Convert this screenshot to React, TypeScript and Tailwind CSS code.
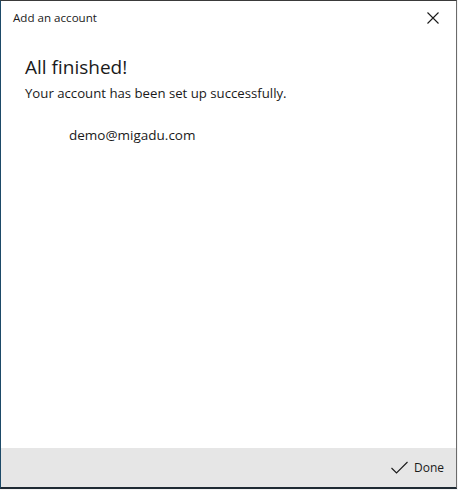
import React from "react";

function CloseIcon() {
  return (
    <svg width="12" height="12" viewBox="0 0 12 12" fill="none">
      <path d="M0.5 0.5 L11.5 11.5 M11.5 0.5 L0.5 11.5" stroke="#1a1a1a" strokeWidth="1.1" />
    </svg>
  );
}

function CheckIcon() {
  return (
    <svg width="17" height="13" viewBox="0 0 17 13" fill="none">
      <path d="M0.5 7 L5.5 12 L16.5 1" stroke="#1a1a1a" strokeWidth="1.1" />
    </svg>
  );
}

export default function App() {
  return (
    <div
      className="flex h-[490px] w-[458px] bg-[#f4f4f4] text-[#1a1a1a]"
      style={{ fontFamily: '"Open Sans", "Noto Sans", sans-serif' }}
    >
      <div className="flex h-[489px] w-[457px] flex-col border-b-2 border-l border-r border-t border-b-[#1f2a33] border-l-[#1d4a68] border-r-[#6b6b6b] border-t-[#3a3a3a] bg-white">
        <div className="flex h-[33px] items-center justify-between pl-3 pr-[17px]">
          <span className="text-[11.6px]">Add an account</span>
          <CloseIcon />
        </div>

        <div className="flex-1 px-6 pt-[20px]">
          <h1 className="text-[19px] leading-[26px]">All finished!</h1>
          <p className="mt-[3px] text-[13.2px] leading-[20px]">
            Your account has been set up successfully.
          </p>
          <p className="mt-[22px] pl-11 text-[13.5px] leading-[20px]">demo@migadu.com</p>
        </div>

        <div className="flex h-[39px] items-center justify-end gap-[6px] bg-[#e6e6e6] pr-[12px]">
          <CheckIcon />
          <span className="text-[12px]">Done</span>
        </div>
      </div>
    </div>
  );
}
